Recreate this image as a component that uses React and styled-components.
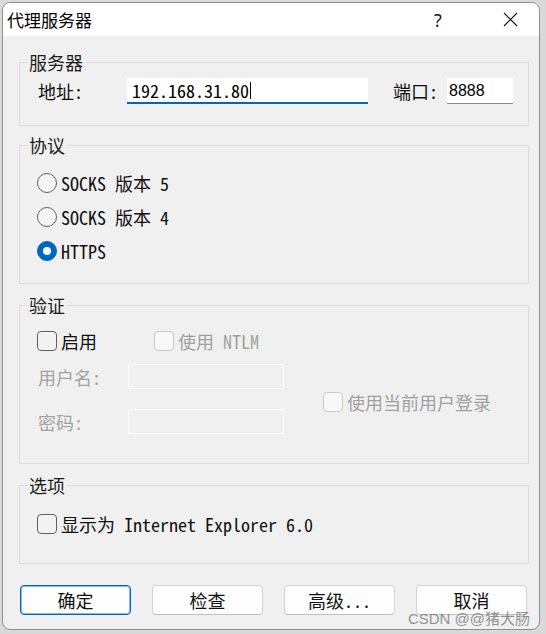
import React from 'react';
import styled, { createGlobalStyle } from 'styled-components';

const GlobalStyle = createGlobalStyle`
  html, body { margin: 0; padding: 0; background: #d9d9d9; }
  body {
    width: 546px; height: 634px; overflow: hidden;
    font-family: "Noto Sans CJK SC", "Noto Sans", sans-serif;
  }
  * { box-sizing: border-box; }
`;

const MONO = `"Noto Sans Mono CJK SC", "Noto Sans CJK SC", monospace`;

const Screen = styled.div`
  padding: 2px 0 0 2px;
`;

const Window = styled.div`
  position: relative;
  width: 538px;
  height: 628px;
  background: #f0f0f0;
  border: 1px solid #8f8f8f;
  border-radius: 8px;
  overflow: hidden;
  display: flex;
  flex-direction: column;
`;

const TitleBar = styled.div`
  height: 33px;
  flex-shrink: 0;
  background: #ffffff;
  display: flex;
  align-items: center;
  padding-left: 4px;
`;

const Title = styled.div`
  flex: 1;
  font-size: 17px;
  line-height: 1;
  color: #000;
`;

const TitleButton = styled.div`
  width: ${p => p.$w}px;
  margin-right: ${p => p.$mr || 0}px;
  height: 33px;
  display: flex;
  align-items: center;
  justify-content: center;
  font-family: "Noto Sans", sans-serif;
  font-size: 18px;
  color: #1a1a1a;
`;

const Body = styled.div`
  padding: 17px 10px 0 16px;
  display: flex;
  flex-direction: column;
`;

const Group = styled.fieldset`
  margin: ${p => p.$top}px 0 0 0;
  padding: ${p => p.$pad};
  border: 1px solid #dcdcdc;
  min-width: 0;
`;

const Legend = styled.legend`
  margin-left: 7px;
  padding: 0 2px;
  font-size: 18px;
  line-height: 18px;
  color: #1c1c1c;
`;

const Row = styled.div`
  display: flex;
  align-items: center;
  height: ${p => p.$h}px;
  padding-left: ${p => p.$pl || 0}px;
`;

const RadioList = styled.div`
  display: flex;
  flex-direction: column;
  padding-left: 17px;
`;

const Label = styled.span`
  width: ${p => p.$w}px;
  flex-shrink: 0;
  font-family: ${MONO};
  font-size: 18px;
  line-height: 1;
  color: ${p => (p.$disabled ? '#a2a2a2' : '#111')};
`;

const AddressBox = styled.div`
  width: 241px;
  height: 26px;
  background: #fff;
  border-bottom: 2px solid #0067c0;
  display: flex;
  align-items: center;
  padding-left: 5px;
  font-family: ${MONO};
  font-size: 18px;
  line-height: 1;
  color: #000;
`;

const Caret = styled.span`
  display: inline-block;
  width: 1px;
  height: 17px;
  background: #000;
  margin-left: 1px;
`;

const PortBox = styled.div`
  width: 66px;
  height: 26px;
  background: #fff;
  border-bottom: 1px solid #8a8a8a;
  display: flex;
  align-items: center;
  padding-left: 2px;
  font-family: "Liberation Sans", sans-serif;
  font-size: 16px;
  color: #000;
`;

const Spacer = styled.span`
  width: ${p => p.$w}px;
  flex-shrink: 0;
`;

const RadioCircle = styled.span`
  width: 20px;
  height: 20px;
  border-radius: 50%;
  flex-shrink: 0;
  border: 1px solid ${p => (p.$checked ? '#0067c0' : '#616161')};
  background: ${p => (p.$checked ? '#0067c0' : '#f5f5f5')};
  display: flex;
  align-items: center;
  justify-content: center;
  &::after {
    content: '';
    display: ${p => (p.$checked ? 'block' : 'none')};
    width: 8px;
    height: 8px;
    border-radius: 50%;
    background: #fff;
  }
`;

const Box = styled.span`
  width: 20px;
  height: 20px;
  flex-shrink: 0;
  border-radius: 4px;
  border: 1px solid ${p => (p.$disabled ? '#cacaca' : '#5f5f5f')};
  background: ${p => (p.$disabled ? '#f8f8f8' : '#f3f3f3')};
`;

const OptionText = styled.span`
  margin-left: 4px;
  font-family: ${MONO};
  font-size: 18px;
  line-height: 1;
  white-space: pre;
  color: ${p => (p.$disabled ? '#a0a0a0' : '#111')};
`;

const Option = styled.div`
  display: flex;
  align-items: center;
  height: ${p => p.$h || 34}px;
  width: ${p => (p.$w ? `${p.$w}px` : 'auto')};
  flex-shrink: 0;
`;

const AuthArea = styled.div`
  display: flex;
  margin-top: 10px;
`;

const FieldCol = styled.div`
  display: flex;
  flex-direction: column;
  gap: 20px;
  padding-left: 18px;
`;

const DisabledInput = styled.div`
  width: 156px;
  height: 25px;
  border: 1px solid #fbfbfb;
  background: #f0f0f0;
`;

const SideOption = styled.div`
  display: flex;
  align-items: center;
  margin-left: 39px;
  margin-top: 5px;
  align-self: center;
`;

const ButtonRow = styled.div`
  display: flex;
  justify-content: space-between;
  margin-top: 21px;
  padding: 0 2px 0 1px;
`;

const Button = styled.div`
  width: 111px;
  height: 30px;
  border-radius: 4px;
  background: #fdfdfd;
  border: 1px solid ${p => (p.$primary ? '#0067c0' : '#d3d3d3')};
  border-bottom-color: ${p => (p.$primary ? '#0067c0' : '#c0c0c0')};
  box-shadow: ${p => (p.$primary ? 'inset 0 0 0 1px rgba(0,103,192,0.45)' : 'none')};
  display: flex;
  align-items: center;
  justify-content: center;
  font-family: ${MONO};
  font-size: 18px;
  line-height: 1;
  color: #111;
`;

const Watermark = styled.div`
  position: absolute;
  right: 9px;
  bottom: 3px;
  font-family: "Liberation Sans", "Noto Sans CJK SC", sans-serif;
  font-size: 15px;
  line-height: 15px;
  color: rgba(105, 105, 105, 0.72);
  white-space: pre;
`;

const CloseIcon = () => (
  <svg width="15" height="15" viewBox="0 0 15 15">
    <path d="M1 1 L14 14 M14 1 L1 14" stroke="#111" strokeWidth="1.1" fill="none" />
  </svg>
);

const Radio = ({ checked, children }) => (
  <Option>
    <RadioCircle $checked={checked} />
    <OptionText>{children}</OptionText>
  </Option>
);

const Check = ({ disabled, children, w, h = 26 }) => (
  <Option $w={w} $h={h}>
    <Box $disabled={disabled} />
    <OptionText $disabled={disabled}>{children}</OptionText>
  </Option>
);

export default function App() {
  return (
    <>
      <GlobalStyle />
      <Screen>
        <Window>
          <TitleBar>
            <Title>代理服务器</Title>
            <TitleButton $w={44} $mr={21}>?</TitleButton>
            <TitleButton $w={58}><CloseIcon /></TitleButton>
          </TitleBar>
          <Body>
            <Group $top={0} $pad="7px 0 21px 0">
              <Legend>服务器</Legend>
              <Row $h={26} $pl={18}>
                <Label $w={89}>地址:</Label>
                <AddressBox>192.168.31.80<Caret /></AddressBox>
                <Spacer $w={25} />
                <Label $w={54}>端口:</Label>
                <PortBox>8888</PortBox>
              </Row>
            </Group>

            <Group $top={10} $pad="12px 0 15px 0">
              <Legend>协议</Legend>
              <RadioList>
                <Radio>SOCKS 版本 5</Radio>
                <Radio>SOCKS 版本 4</Radio>
                <Radio checked>HTTPS</Radio>
              </RadioList>
            </Group>

            <Group $top={12} $pad="14px 0 29px 0">
              <Legend>验证</Legend>
              <Row $h={26} $pl={17}>
                <Check w={117}>启用</Check>
                <Check disabled>使用 NTLM</Check>
              </Row>
              <AuthArea>
                <FieldCol>
                  <Row $h={25}>
                    <Label $w={90} $disabled>用户名:</Label>
                    <DisabledInput />
                  </Row>
                  <Row $h={25}>
                    <Label $w={90} $disabled>密码:</Label>
                    <DisabledInput />
                  </Row>
                </FieldCol>
                <SideOption>
                  <Box $disabled />
                  <OptionText $disabled>使用当前用户登录</OptionText>
                </SideOption>
              </AuthArea>
            </Group>

            <Group $top={12} $pad="17px 0 26px 0">
              <Legend>选项</Legend>
              <Row $h={26} $pl={17}>
                <Check>显示为 Internet Explorer 6.0</Check>
              </Row>
            </Group>

            <ButtonRow>
              <Button $primary>确定</Button>
              <Button>检查</Button>
              <Button>高级...</Button>
              <Button>取消</Button>
            </ButtonRow>
          </Body>
          <Watermark>CSDN @@猪大肠</Watermark>
        </Window>
      </Screen>
    </>
  );
}
